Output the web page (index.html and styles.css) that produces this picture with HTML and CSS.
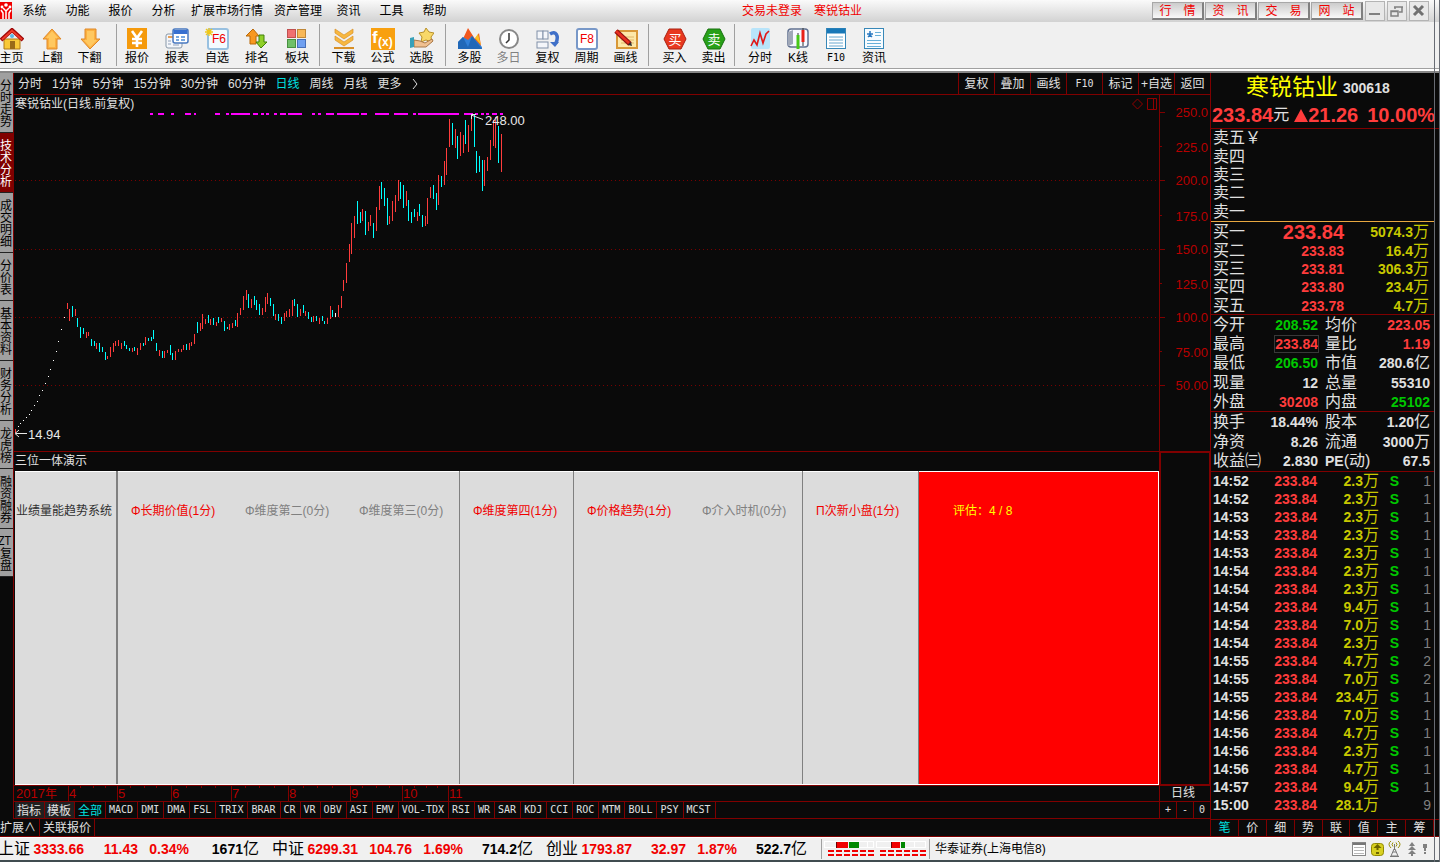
FILE: index.html
```html
<!DOCTYPE html>
<html lang="zh-CN">
<head>
<meta charset="utf-8">
<title>寒锐钴业 300618</title>
<link rel="stylesheet" href="styles.css">
</head>
<body>
<header class="menubar">
  <svg class="brand" width="13" height="20" viewBox="0 0 13 20"><rect y="1" width="12" height="17" fill="#f00000"/><path d="M3 7l3 3v8M9 7L6 10M1 9l2 3v6M11 9l-2 3v6" stroke="#fff" stroke-width="1.500" fill="none"/><circle cx="6" cy="4" r="1.800" fill="#fff"/><circle cx="2" cy="6" r="1.400" fill="#fff"/><circle cx="10" cy="6" r="1.400" fill="#fff"/></svg>
  <nav class="menu">
    <button>系统</button><button>功能</button><button>报价</button><button>分析</button><button class="menu-wide">扩展市场行情</button><button>资产管理</button><button>资讯</button><button>工具</button><button>帮助</button>
  </nav>
  <div class="login"><span>交易未登录</span><span>寒锐钴业</span></div>
  <div class="channels"><button>行<span>情</span></button><button>资<span>讯</span></button><button>交<span>易</span></button><button>网<span>站</span></button></div>
  <div class="window-controls">
    <button aria-label="最小化"><svg width="18" height="18" viewBox="0 0 18 18"><path d="M3 12h11" stroke="#808080" stroke-width="2"/></svg></button>
    <button aria-label="还原"><svg width="18" height="18" viewBox="0 0 18 18" fill="none" stroke="#808080" stroke-width="1.500"><path d="M7 7V5h7v5h-3M6 5h9"/><path d="M3 9h7v5H3zM3 9.500h7"/></svg></button>
    <button aria-label="关闭"><svg width="18" height="18" viewBox="0 0 18 18"><path d="M4 4l9 9M13 4l-9 9" stroke="#707070" stroke-width="3"/></svg></button>
  </div>
</header>

<div class="toolbar">
  <div class="tools tools-nav">
    <button><svg viewBox="0 0 24 22"><path d="M4 11h16v10H4z" fill="#f8c838" stroke="#b07818"/><path d="M1 12L12 2l11 10" fill="none" stroke="#a00808" stroke-width="4"/><path d="M2 11.500L12 2.500l10 9" fill="none" stroke="#ee3a2a" stroke-width="2"/><rect x="10" y="13" width="5" height="8" fill="#9a6a18"/><circle cx="12" cy="8" r="2" fill="#58b8e8"/></svg>主页</button>
    <button><svg viewBox="0 0 24 22"><path d="M13 1l9 10h-4v10H8V11H4z" fill="#fbb040" stroke="#e08828"/><path d="M13 3l6 7h-3v9h-6v-9H7z" fill="#ffc860"/></svg>上翻</button>
    <button><svg viewBox="0 0 24 22"><path d="M12 21l10-10h-4V1H7v10H3z" fill="#fbb040" stroke="#e08828"/><path d="M12 19l7-7h-3V3H9v9H6z" fill="#ffc860"/></svg>下翻</button>
  </div>
  <div class="tools tools-quote">
    <button><svg viewBox="0 0 24 22"><rect x="2" width="20" height="21" fill="#f59a0c"/><path d="M7 3l5 7 5-7M12 10v9M7 11h10M7 15h10" stroke="#fff" stroke-width="2.600" fill="none"/></svg>报价</button>
    <button><svg viewBox="0 0 24 22"><rect x="1" y="6" width="16" height="14" rx="2" fill="#f4f6fa" stroke="#8898a8"/><path d="M3 9h5" stroke="#e8a058" stroke-width="2"/><path d="M3 13h3M3 16h3M8 17h6" stroke="#90a0b8"/><rect x="8" y="1" width="15" height="14" rx="2" fill="#fff" stroke="#4878c0" stroke-width="1.500"/><path d="M8.500 4h14" stroke="#3870d0" stroke-width="4"/><path d="M11 9h3M16 9h4M11 12h3M16 12h4" stroke="#78a8e0" stroke-width="2"/></svg>报表</button>
    <button><svg viewBox="0 0 24 22"><rect x="3" y="1" width="20" height="20" rx="2" fill="#f4fbff" stroke="#98c0e0" stroke-width="2"/><text x="7" y="15" font-size="12" fill="#f00000">F6</text><path d="M4 0v8M0 4h8M1 1l6 6M7 1L1 7" stroke="#f0c818" stroke-width="1.300"/></svg>自选</button>
    <button><svg viewBox="0 0 24 22"><path d="M8 1l6 7h-3v8H5V8H1z" fill="#f89820" stroke="#b86808"/><path d="M16 20l6-6h-3V7h-5v7h-3z" fill="#90d028" stroke="#408008"/></svg>排名</button>
    <button><svg viewBox="0 0 24 22"><g stroke-width="1"><rect x="2.500" y="1.500" width="8" height="8" fill="#f07070" stroke="#c05050"/><rect x="12.500" y="1.500" width="8" height="8" fill="#f8b858" stroke="#c08838"/><rect x="2.500" y="11.500" width="8" height="8" fill="#70c068" stroke="#489040"/><rect x="12.500" y="11.500" width="8" height="8" fill="#70a0f0" stroke="#4870b8"/></g></svg>板块</button>
  </div>
  <div class="tools tools-extra">
    <button><svg viewBox="0 0 24 22"><path d="M3 1l9 6 9-6v4l-9 6-9-6zM3 8l9 6 9-6v4l-9 6-9-6z" fill="#f8b840" stroke="#d89028" stroke-width=".7"/><path d="M2 20h20" stroke="#d89028" stroke-width="2"/></svg>下载</button>
    <button><svg viewBox="0 0 24 22"><rect width="24" height="22" fill="#f8a010"/><text x="1" y="15" font-size="17" fill="#fff" font-weight="bold">f</text><text x="7" y="18" font-size="12" fill="#fff" font-weight="bold">(x)</text></svg>公式</button>
    <button><svg viewBox="0 0 24 22"><path d="M16 0l3 4 5 1-3 4 1 5-6-2-5 2 1-5-3-4 5-1z" fill="#f8d868" stroke="#b89028"/><path d="M4 12l6 1 5 2 7-4 1 2-7 6H4z" fill="#f0c090" stroke="#a87848"/><path d="M0 10l4-1v10l-4 1z" fill="#38a0b8"/></svg>选股</button>
  </div>
  <div class="tools tools-view">
    <button><svg viewBox="0 0 24 22"><path d="M3 15L10 0l7 11 4-6 2 13z" fill="#f05820"/><path d="M17 10l3-4 3 11z" fill="#f8c020"/><path d="M0 14l5-5 5 3 4-4 10 11v2H0z" fill="#3080d8"/><path d="M0 14l5-5 5 10 4-11 10 13H0z" fill="#2068b8"/></svg>多股</button>
    <button class="muted"><svg viewBox="0 0 24 22"><circle cx="12" cy="11" r="9" fill="#fff" stroke="#888" stroke-width="2"/><path d="M12 5v7l-3 3" fill="none" stroke="#333" stroke-width="1.500"/></svg>多日</button>
    <button><svg viewBox="0 0 24 22"><g fill="#f4f6fa" stroke="#8090a8"><rect x="1" y="3" width="6" height="8"/><rect x="7" y="3" width="5" height="8"/><rect x="1" y="14" width="11" height="6"/></g><path d="M14 6c6-4 9 2 6 9" fill="none" stroke="#4070c8" stroke-width="3.500"/><path d="M14 14h9l-4 5z" fill="#4070c8"/></svg>复权</button>
    <button><svg viewBox="0 0 24 22"><rect x="2" y="1" width="20" height="20" rx="2" fill="#fff" stroke="#7898c8" stroke-width="2"/><text x="5" y="15" font-size="12" fill="#f00000">F8</text></svg>周期</button>
    <button><svg viewBox="0 0 24 22"><rect x="3" y="3" width="20" height="17" fill="#fde8a8" stroke="#d89838" stroke-width="2"/><path d="M7 9h13M7 12h13M7 15h13" stroke="#e0b868"/><path d="M2 3l14 13" stroke="#901010" stroke-width="5"/><path d="M2 3l13 12" stroke="#e83020" stroke-width="2.500"/><path d="M14 17l4 1-1-4z" fill="#333"/></svg>画线</button>
  </div>
  <div class="tools tools-trade">
    <button><svg viewBox="0 0 24 22"><path d="M6 1h12l5 10-5 10H6L1 11z" fill="#e83820" stroke="#a82010"/><text x="12" y="16" font-size="13" fill="#fff" text-anchor="middle">买</text></svg>买入</button>
    <button><svg viewBox="0 0 24 22"><path d="M6 1h12l5 10-5 10H6L1 11z" fill="#28a018" stroke="#187010"/><text x="12" y="16" font-size="13" fill="#fff" text-anchor="middle">卖</text></svg>卖出</button>
  </div>
  <div class="tools tools-stock">
    <button><svg viewBox="0 0 24 22"><rect x="3" y="0" width="19" height="21" rx="2" fill="#b8e4fa"/><path d="M3 18l3-6 3 5 3-12 3 10 3-9 3-3" fill="none" stroke="#e01818" stroke-width="1.600"/></svg>分时</button>
    <button><svg viewBox="0 0 24 22"><rect x="2" y="1" width="20" height="18" rx="3" fill="#f8f8ff" stroke="#607090" stroke-width="1.500"/><path d="M2 4l5-2v14l-5 2z" fill="#a0a8b8"/><path d="M12 5v16M17 0v18" stroke="#333"/><path d="M12 7v14" stroke="#48c818" stroke-width="3"/><path d="M17 2v12" stroke="#e82018" stroke-width="3"/></svg>K线</button>
    <button><svg viewBox="0 0 24 22"><rect x="2.500" y=".5" width="19" height="20" fill="#fff" stroke="#3888b8"/><path d="M3 3h18" stroke="#1878b8" stroke-width="5"/><path d="M5 9h14M5 12h14M5 15h14M5 18h14" stroke="#68a8d0"/></svg><i class="f10">F10</i></button>
    <button><svg viewBox="0 0 24 22"><rect x="2.500" y=".5" width="19" height="20" fill="#f8fcff" stroke="#3888b8"/><path d="M13 4.500h6M13 7.500h6M5 12.500h14M5 15.500h14M5 18.500h14" stroke="#68b0d8"/><path d="M8 3v6M5 6h6M6 9l2-2 2 2" stroke="#2878c0" stroke-width="1.500" fill="none"/></svg>资讯</button>
  </div>
</div>

<main class="workspace">
  <section class="terminal">
    <div class="desk">
      <nav class="side">
        <button class="tall">分时走势</button><button class="tall on">技术分析</button><button class="tall">成交明细</button><button>分价表</button><button class="tall">基本资料</button><button class="tall">财务分析</button><button>龙虎榜</button><button class="tall">融资融券</button><button><span class="across">ZT</span>复盘</button>
      </nav>
      <div class="charts">
        <div class="periods">
          <nav class="period-list"><button>分时</button><button>1分钟</button><button>5分钟</button><button>15分钟</button><button>30分钟</button><button>60分钟</button><button class="cyan">日线</button><button>周线</button><button>月线</button><button>更多</button><button aria-label="展开"><svg width="6" height="12" viewBox="0 0 6 12"><path d="M1 1l4 5-4 5" fill="none" stroke="#e0e0e0"/></svg></button></nav>
          <div class="chart-tools"><button>复权</button><button>叠加</button><button>画线</button><button class="mono">F10</button><button>标记</button><button>+自选</button><button>返回</button></div>
        </div>
        <div class="pane pane-k">
          <div class="plot">
            <svg class="canvas" shape-rendering="crispEdges">
              <g fill="none" stroke="#780000" stroke-dasharray="1 3">
                <path d="M1 85.500H3000M1 154.500H3000M1 222.500H3000M1 290.500H3000"/>
              </g>
              <g transform="translate(-14 -95)">
                <path fill="none" stroke="#ff00ff" stroke-width="2" d="M150 114h3M158 114h6M171 114h3M185 114h6M194 114h2M215 114h5M226 114h3M231 114h19M253 114h5M261 114h3M266 114h3M274 114h3M280 114h6M288 114h14M312 114h3M318 114h3M326 114h8M337 114h22M361 114h6M375 114h14M394 114h14M413 114h3M418 114h41M464 114h9M475 114h3M481 114h3M486 114h3M492 114h5M500 114h3"/>
                <path transform="translate(.5 0)" fill="none" stroke="#ff3c3c" d="M15 429v4M67 303V309M69 309V321M75 309V316M86 332V338M88 332V336M96 343V349M107 356V359M110 347V357M113 343V352M115 341V346M118 340V346M121 343V349M132 348V352M137 348V355M140 343V350M145 337V345M159 350V356M164 351V358M167 350V353M175 351V360M178 349V352M181 349V352M183 345V350M189 343V350M191 342V346M194 334V344M200 323V331M202 314V329M205 319V324M210 319V325M216 322V326M221 318V322M229 324V330M232 323V328M237 313V327M240 308V315M243 296V310M246 290V300M251 299V308M262 308V315M265 297V312M267 293V304M275 314V320M284 313V321M286 311V317M289 309V317M292 300V316M300 309V316M305 311V316M313 316V322M319 318V324M327 318V324M330 306V319M338 305V317M341 296V308M343 280V291M346 263V283M349 244V262M351 223V254M354 216V238M362 209V221M368 222V231M370 215V226M376 207V231M379 186V210M389 216V224M392 201V221M395 195V212M398 180V201M406 191V206M417 212V221M425 216V226M427 198V224M430 187V198M438 175V205M444 161V185M446 148V175M449 119V147M455 129V148M460 132V156M463 135V153M468 125V152M471 115V131M484 160V186M487 157V171M490 140V160M493 120V146M495 117V148M501 134V172"/>
                <path transform="translate(.5 0)" fill="none" stroke="#00ffff" d="M72 306V317M77 318V327M80 327V338M83 328V334M91 339V346M94 341V346M99 343V352M102 347V352M105 352V360M124 341V346M126 345V349M129 348V351M134 347V351M143 343V346M148 338V341M151 337V341M153 330V339M156 343V351M162 351V358M170 345V355M172 353V360M186 344V350M197 322V333M208 315V323M213 318V325M218 317V323M224 321V331M227 327V329M235 320V326M248 294V308M254 296V305M256 300V310M259 304V315M270 298V306M273 304V316M278 314V321M281 317V324M294 299V306M297 304V317M303 305V313M308 312V319M311 317V322M316 316V321M322 316V321M324 321V324M332 310V317M357 201V224M360 212V223M365 211V235M373 223V238M381 182V199M384 188V206M387 198V225M400 182V199M403 185V208M408 200V221M411 212V223M414 209V217M419 204V216M422 215V227M433 185V199M436 193V210M441 176V187M452 123V145M457 136V159M465 120V144M474 115V147M476 151V173M479 156V172M482 160V191M498 126V163"/>
                <path transform="translate(.5 0)" fill="none" stroke="#fff" d="M335 313v4M18 426v1M20 423v1M23 420v1M26 417v1M29 414v1M31 410v1M34 405v1M37 401v1M39 395v1M42 390v1M45 383v1M48 376v1M50 369v1M53 360v1M56 351v1M58 341v1M61 329v1M64 317v1"/>
                <g fill="none" stroke="#e8e8e8" shape-rendering="auto"><path d="M16 433.500h11M19 430l-4 3.500 4 3.500M471 115l12 4.500M476 114.500h-4.500v4.500"/></g>
                <g fill="#e8e8e8" font-size="13"><text x="28" y="439">14.94</text><text x="485" y="125">248.00</text></g>
              </g>
            </svg>
            <h2 class="pane-title">寒锐钴业(日线.前复权)</h2>
            <svg class="pane-marks" width="26" height="12" viewBox="0 0 26 12" fill="none" stroke="#900000"><path d="M5.500 1l5 5-5 5-5-5z"/><path d="M15.500.5h9v11h-9zM21.500.5v11"/></svg>
          </div>
          <svg class="axis" shape-rendering="crispEdges">
            <path fill="none" stroke="#800000" d="M0 17.500h5M0 51.500h2M0 85.500h5M0 120.500h2M0 154.500h5M0 188.500h2M0 222.500h5M0 256.500h2M0 290.500h5"/>
            <g fill="#b80000" font-size="13" text-anchor="end"><text x="48" y="22">250.0</text><text x="48" y="57">225.0</text><text x="48" y="90">200.0</text><text x="48" y="126">175.0</text><text x="48" y="159">150.0</text><text x="48" y="194">125.0</text><text x="48" y="227">100.0</text><text x="48" y="262">75.00</text><text x="48" y="295">50.00</text></g>
          </svg>
        </div>
        <div class="pane pane-score">
          <div class="score">
            <h2 class="pane-title">三位一体演示</h2>
            <div class="score-grid">
              <div class="dark thick">业绩量能趋势系统</div><div class="hit">Φ长期价值(1分)</div><div>Φ维度第二(0分)</div><div class="ruled">Φ维度第三(0分)</div><div class="hit ruled">Φ维度第四(1分)</div><div class="hit">Φ价格趋势(1分)</div><div class="ruled">Φ介入时机(0分)</div><div class="hit ruled">П次新小盘(1分)</div><div class="total">评估：4 / 8</div>
            </div>
          </div>
          <div class="score-axis"></div>
        </div>
        <div class="time-row">
          <svg class="time-axis" shape-rendering="crispEdges">
            <path fill="none" stroke="#800000" d="M54.500 0v16M103.500 0v16M157.500 0v16M217.500 0v16M274.500 0v16M336.500 0v16M388.500 0v16M434.500 0v16M66.500 0v2M79.500 0v2M91.500 0v2M116.500 0v2M130.500 0v2M142.500 0v2M172.500 0v2M187.500 0v2M201.500 0v2M231.500 0v2M245.500 0v2M260.500 0v2M289.500 0v2M303.500 0v2M318.500 0v2M348.500 0v2M362.500 0v2M375.500 0v2M400.500 0v2M412.500 0v2M423.500 0v2"/>
            <g fill="#b80000" font-size="13"><text x="2" y="12">2017<tspan font-size="12">年</tspan></text><text x="55" y="12">4</text><text x="104" y="12">5</text><text x="158" y="12">6</text><text x="218" y="12">7</text><text x="275" y="12">8</text><text x="337" y="12">9</text><text x="389" y="12">10</text><text x="435" y="12">11</text></g>
          </svg>
          <div class="cycle">日线</div>
        </div>
        <div class="indicators">
          <nav class="indicator-list"><button class="cn raised">指标</button><button class="cn raised">模板</button><button class="cn cyan">全部</button><button>MACD</button><button>DMI</button><button>DMA</button><button>FSL</button><button>TRIX</button><button>BRAR</button><button>CR</button><button>VR</button><button>OBV</button><button>ASI</button><button>EMV</button><button>VOL-TDX</button><button>RSI</button><button>WR</button><button>SAR</button><button>KDJ</button><button>CCI</button><button>ROC</button><button>MTM</button><button>BOLL</button><button>PSY</button><button>MCST</button></nav>
          <div class="zooms"><button>+</button><button>-</button><button>0</button></div>
        </div>
      </div>
    </div>
    <nav class="links"><button>扩展∧</button><button>关联报价</button></nav>
  </section>

  <aside class="quote">
    <h1 class="stock">寒锐钴业<b>300618</b></h1>
    <div class="last"><b>233.84</b><span>元</span><b class="rise"><svg width="14" height="13" viewBox="0 0 14 13"><path d="M7 0l7 13H0z" fill="#ff3c3c"/></svg>21.26</b><b>10.00%</b></div>
    <table class="book asks">
      <tr><th>卖五￥</th></tr><tr><th>卖四</th></tr><tr><th>卖三</th></tr><tr><th>卖二</th></tr><tr><th>卖一</th></tr>
    </table>
    <table class="book bids">
      <tr><th>买一</th><td class="up best">233.84</td><td class="vol"><b>5074.3</b>万</td></tr>
      <tr><th>买二</th><td class="up">233.83</td><td class="vol"><b>16.4</b>万</td></tr>
      <tr><th>买三</th><td class="up">233.81</td><td class="vol"><b>306.3</b>万</td></tr>
      <tr><th>买四</th><td class="up">233.80</td><td class="vol"><b>23.4</b>万</td></tr>
      <tr><th>买五</th><td class="up">233.78</td><td class="vol"><b>4.7</b>万</td></tr>
    </table>
    <table class="facts facts-price">
      <tr><th>今开</th><td class="down">208.52</td><th>均价</th><td class="up">223.05</td></tr>
      <tr><th>最高</th><td class="up"><span class="boxed">233.84</span></td><th>量比</th><td class="up">1.19</td></tr>
      <tr><th>最低</th><td class="down">206.50</td><th>市值</th><td>280.6<i>亿</i></td></tr>
      <tr><th>现量</th><td>12</td><th>总量</th><td>55310</td></tr>
      <tr><th>外盘</th><td class="up">30208</td><th>内盘</th><td class="down">25102</td></tr>
    </table>
    <table class="facts facts-base">
      <tr><th>换手</th><td>18.44%</td><th>股本</th><td>1.20<i>亿</i></td></tr>
      <tr><th>净资</th><td>8.26</td><th>流通</th><td>3000<i>万</i></td></tr>
      <tr><th>收益㈢</th><td>2.830</td><th><b>PE</b>(动)</th><td>67.5</td></tr>
    </table>
    <table class="ticks">
      <tr><th>14:52</th><td class="up">233.84</td><td class="vol">2.3<i>万</i></td><td class="side-s">S</td><td class="n">1</td></tr>
      <tr><th>14:52</th><td class="up">233.84</td><td class="vol">2.3<i>万</i></td><td class="side-s">S</td><td class="n">1</td></tr>
      <tr><th>14:53</th><td class="up">233.84</td><td class="vol">2.3<i>万</i></td><td class="side-s">S</td><td class="n">1</td></tr>
      <tr><th>14:53</th><td class="up">233.84</td><td class="vol">2.3<i>万</i></td><td class="side-s">S</td><td class="n">1</td></tr>
      <tr><th>14:53</th><td class="up">233.84</td><td class="vol">2.3<i>万</i></td><td class="side-s">S</td><td class="n">1</td></tr>
      <tr><th>14:54</th><td class="up">233.84</td><td class="vol">2.3<i>万</i></td><td class="side-s">S</td><td class="n">1</td></tr>
      <tr><th>14:54</th><td class="up">233.84</td><td class="vol">2.3<i>万</i></td><td class="side-s">S</td><td class="n">1</td></tr>
      <tr><th>14:54</th><td class="up">233.84</td><td class="vol">9.4<i>万</i></td><td class="side-s">S</td><td class="n">1</td></tr>
      <tr><th>14:54</th><td class="up">233.84</td><td class="vol">7.0<i>万</i></td><td class="side-s">S</td><td class="n">1</td></tr>
      <tr><th>14:54</th><td class="up">233.84</td><td class="vol">2.3<i>万</i></td><td class="side-s">S</td><td class="n">1</td></tr>
      <tr><th>14:55</th><td class="up">233.84</td><td class="vol">4.7<i>万</i></td><td class="side-s">S</td><td class="n">2</td></tr>
      <tr><th>14:55</th><td class="up">233.84</td><td class="vol">7.0<i>万</i></td><td class="side-s">S</td><td class="n">2</td></tr>
      <tr><th>14:55</th><td class="up">233.84</td><td class="vol">23.4<i>万</i></td><td class="side-s">S</td><td class="n">1</td></tr>
      <tr><th>14:56</th><td class="up">233.84</td><td class="vol">7.0<i>万</i></td><td class="side-s">S</td><td class="n">1</td></tr>
      <tr><th>14:56</th><td class="up">233.84</td><td class="vol">4.7<i>万</i></td><td class="side-s">S</td><td class="n">1</td></tr>
      <tr><th>14:56</th><td class="up">233.84</td><td class="vol">2.3<i>万</i></td><td class="side-s">S</td><td class="n">1</td></tr>
      <tr><th>14:56</th><td class="up">233.84</td><td class="vol">4.7<i>万</i></td><td class="side-s">S</td><td class="n">1</td></tr>
      <tr><th>14:57</th><td class="up">233.84</td><td class="vol">9.4<i>万</i></td><td class="side-s">S</td><td class="n">1</td></tr>
      <tr><th>15:00</th><td class="up">233.84</td><td class="vol">28.1<i>万</i></td><td></td><td class="n">9</td></tr>
    </table>
    <nav class="quote-tabs"><button class="cyan">笔</button><button>价</button><button>细</button><button>势</button><button>联</button><button>值</button><button>主</button><button>筹</button></nav>
  </aside>
</main>

<footer class="ticker">
  <div class="index"><span>上证</span><b>3333.66</b><b>11.43</b><b>0.34%</b><span class="amount"><b>1671</b>亿</span></div>
  <div class="index"><span>中证</span><b>6299.31</b><b>104.76</b><b>1.69%</b><span class="amount"><b>714.2</b>亿</span></div>
  <div class="index"><span>创业</span><b>1793.87</b><b>32.97</b><b>1.87%</b><span class="amount"><b>522.7</b>亿</span></div>
  <div class="gauges"><svg width="107" height="20" viewBox="0 0 107 20" shape-rendering="crispEdges">
    <path d="M2.500 2.500h49v6h-49zM54.500 2.500h49v6h-49zM45.500 2v6M92.500 2v6" fill="none" stroke="#fff"/>
    <path d="M14 3h12v6H14zM69 3h9v6h-9z" fill="#f00000"/><path d="M14 3h1v6h-1zM69 3h1v6h-1z" fill="#700000"/><path d="M27 3h10v6H27zM79 3h4v6h-4z" fill="#008800"/>
    <path d="M6 12h46M6 16h46M58 12h46M58 16h46" stroke="#f00000" stroke-width="2" stroke-dasharray="6 2"/>
  </svg></div>
  <div class="server">华泰证券(上海电信8)</div>
  <div class="tray">
    <svg width="15" height="16" viewBox="0 0 15 16"><rect x=".5" y="1.500" width="13" height="13" fill="#fff" stroke="#888"/><path d="M1 3h13" stroke="#777" stroke-width="2"/><path d="M2 6.500h10M2 9.500h10M2 12.500h10" stroke="#b8b8b8"/></svg>
    <svg width="13" height="16" viewBox="0 0 13 16"><rect x=".5" y="2.500" width="12" height="12" rx="3" fill="#d8d020" stroke="#908800"/><path d="M6.500 3l4 4h-3v2h-2V7h-3zM5 11h3v2H5z" fill="#6c6400"/></svg>
    <svg width="13" height="18" viewBox="0 0 13 18" fill="none"><path d="M3 1Q-1 4 3 8M10 1q4 3 0 7M5 2.500Q3 4.500 5 6.500M8 2.500q2 2 0 4" stroke="#98900c"/><path d="M6.500 4v6M6 9l-3 7h7l-3-7M5 12h3M2 16.500h9" stroke="#777"/></svg>
    <svg width="8" height="14" viewBox="0 0 8 14"><path d="M4 0l3 4H1zM4 4l4 4H0zM4 8l4 4H0zM3 11h2v3H3z" fill="#808080"/></svg>
    <svg width="4" height="10" viewBox="0 0 4 10"><path d="M0 0h4v4H3v3H1V4H0zM1 8h2v2H1z" fill="#808080"/></svg>
  </div>
</footer>
<div class="window-edge"></div>
</body>
</html>
```
FILE: styles.css
```css
* { box-sizing: border-box; }
body {
  margin: 0;
  min-height: 100vh;
  display: flex;
  flex-direction: column;
  overflow-x: hidden;
  position: relative;
  background: #0a0a0a;
  color: #e0e0e0;
  font: 12px/16px "Liberation Sans", "Noto Sans CJK SC", sans-serif;
}
button {
  margin: 0;
  padding: 0;
  border: 0;
  background: none;
  color: inherit;
  font: inherit;
  white-space: nowrap;
}
h1, h2 { margin: 0; font-weight: normal; }
i { font-style: normal; font-weight: normal; }
svg { display: block; }
table { width: 100%; border-collapse: collapse; table-layout: fixed; }
th, td { padding: 0; font-weight: normal; white-space: nowrap; }
.cyan { color: #00e0e0; }

/* menu bar */
.menubar {
  height: 22px;
  display: flex;
  align-items: center;
  padding-right: 11px;
  background: linear-gradient(#fafafa, #d2d2d2);
  color: #000;
}
.brand { flex: none; }
.menu { display: flex; }
.menu button { min-width: 43px; padding: 0 5px; }
.menu .menu-wide { padding: 0 6px; }
.login { display: flex; gap: 12px; margin: 0 auto; padding-right: 4px; color: #f00000; }
.channels { display: flex; gap: 1px; margin-right: 2px; }
.channels button {
  width: 52px;
  height: 18px;
  display: flex;
  align-items: center;
  justify-content: center;
  gap: 12px;
  border: 1px solid #a8a8a8;
  border-right: 2px solid #808080;
  border-bottom: 2px solid #808080;
  background: linear-gradient(#ccc, #f8f8f8);
  color: #f00000;
}
.window-controls { display: flex; gap: 2px; }
.window-controls button {
  width: 20px;
  height: 20px;
  border: 1px solid #b4b4b4;
  background: #e8e8e8;
}

/* toolbar */
.toolbar {
  height: 51px;
  display: flex;
  padding: 2px 0 0;
  background: #f0f0f0;
  border-bottom: 2px solid #888;
  box-shadow: inset 0 -2px #fff, inset 0 -3px #a0a0a0;
  color: #000;
}
.tools { display: flex; height: 42px; border-right: 1px solid #a0a0a0; }
.tools button { width: 39px; line-height: 14px; display: flex; flex-direction: column; align-items: center; padding-top: 4px; gap: 1px; }
.tools svg { width: 24px; height: 22px; }
.tools-nav { margin-left: -8px; padding-right: 7px; }
.tools-quote { padding-right: 2px; }
.tools-quote button { width: 40px; }
.tools-extra, .tools-view { padding-left: 4px; padding-right: 4px; }
.tools-view { padding-right: 3px; }
.tools-trade { padding-left: 6px; padding-right: 1px; }
.tools-stock { padding-left: 6px; border-right: 0; }
.tools-stock button { width: 38px; }
.muted { color: #808080; }
.f10, .mono { font-family: "DejaVu Sans Mono", monospace; font-size: 10px; }

/* work area */
.workspace { flex: 1; display: flex; }
.terminal { flex: 1; min-width: 0; display: flex; flex-direction: column; }
.desk { flex: 1; display: flex; }
.side { width: 14px; border-right: 1px solid #800000; }
.side button {
  display: flex;
  align-items: center;
  justify-content: center;
  width: 13px;
  height: 48px;
  padding-right: 4px;
  border-bottom: 1px solid #222;
  background: #a0a0a0;
  color: #000;
  writing-mode: vertical-rl;
  text-orientation: upright;
  line-height: 12px;
}
.side .tall { height: 60px; }
.side .on { background: #800000; color: #fff; }
.across { text-combine-upright: all; }

.charts { flex: 1; min-width: 0; display: flex; flex-direction: column; }
.periods { height: 22px; display: flex; justify-content: space-between; border-bottom: 1px solid #800000; }
.period-list { display: flex; align-items: center; gap: 10px; padding-left: 4px; }
.chart-tools { display: flex; }
.chart-tools button { width: 36px; border-left: 1px solid #800000; }

.pane { display: flex; min-height: 0; }
.pane-k { flex: 357 0 0; border-bottom: 1px solid #800000; }
.plot { flex: 1; min-width: 0; position: relative; }
.canvas { position: absolute; inset: 0; width: 100%; height: 100%; }
.pane-title { font-size: 12px; line-height: 18px; padding-left: 1px; }
.plot .pane-title { position: relative; width: max-content; }
.pane-marks { position: absolute; top: 3px; right: 1px; }
.axis { width: 51px; height: 100%; border-left: 1px solid #800000; }
.pane-score { flex: 333 0 0; }
.score { flex: 1; min-width: 0; display: flex; flex-direction: column; }
.score-grid {
  flex: 1;
  margin: 1px 0 0 1px;
  display: grid;
  grid-template-columns: 103fr 114fr 114fr 114fr 114fr 115fr 114fr 116fr 240fr;
  background: #dcdcdc;
  border-bottom: 1px solid #fff;
  box-shadow: inset 0 1px #fff;
}
.score-grid div { padding: 32px 0 0 13px; color: #808080; white-space: nowrap; }
.score-grid .hit { color: #f00000; }
.score-grid .dark { padding-left: 1px; color: #303030; }
.score-grid .thick { border-right: 2px solid #808080; }
.score-grid .ruled { border-right: 1px solid #808080; }
.score-grid .total { padding: 31px 0 0 34px; background: #f00; color: #ff0; border-top: 1px solid #fff; border-right: 1px solid #fff; }
.score-axis { width: 51px; border: 1px solid #800000; border-left-width: 2px; }

.time-row { height: 17px; display: flex; border-top: 1px solid #800000; border-bottom: 1px solid #800000; }
.time-axis { flex: 1; min-width: 0; height: 100%; }
.cycle { width: 51px; text-align: center; line-height: 15px; border-left: 1px solid #800000; padding-right: 4px; }
.indicators { height: 17px; display: flex; justify-content: space-between; border-bottom: 1px solid #800000; }
.indicator-list { display: flex; padding-left: 1px; }
.indicator-list button {
  padding: 0 4px 0 3px;
  border-right: 1px solid #800000;
  font: 10px/16px "DejaVu Sans Mono", monospace;
}
.indicator-list .cn { padding: 0 3px 0 2px; font: 12px/16px "Noto Sans CJK SC", sans-serif; }
.indicator-list .cn.cyan { padding-left: 3px; }
.raised { background: #202020; }
.zooms { width: 51px; display: flex; border-left: 1px solid #800000; }
.zooms button { flex: 1; border-right: 1px solid #800000; font: 10px/16px "DejaVu Sans Mono", monospace; }
.zooms button:last-child { border-right: 0; }
.links { height: 18px; display: flex; border-bottom: 1px solid #800000; }
.links button { padding: 0 3px; border-right: 1px solid #800000; }
.links button:first-child { padding-left: 0; }

/* quote panel */
.quote {
  width: 230px;
  padding-right: 6px;
  border-left: 1px solid #800000;
  display: flex;
  flex-direction: column;
  font-size: 16px;
}
.stock { height: 30px; line-height: 29px; padding-left: 35px; font-size: 23px; color: #ff0; display: flex; gap: 5px; white-space: nowrap; }
.stock b { font-size: 14px; color: #e0e0e0; line-height: 30px; }
.last { height: 26px; line-height: 24px; display: flex; padding-left: 1px; border-bottom: 1px solid #800000; white-space: nowrap; margin-right: -6px; }
.last b { font-size: 20px; color: #ff3c3c; }
.last .rise { display: flex; align-items: center; margin: 0 9px 0 5px; height: 24px; }
.book, .facts { font-size: 16px; line-height: 18px; }
.book th, .facts th { text-align: left; padding-left: 2px; }
.book tr, .ticks tr { height: 18px; }
.asks { border-bottom: 1px solid #e8a840; height: 93px; }
.bids { border-bottom: 1px solid #800000; height: 93px; line-height: 16px; }
.bids th, .bids td { padding-top: 2px; }
.bids th { width: 36px; }
.bids td { text-align: right; font-size: 14px; font-weight: bold; }
.bids .up { width: 97px; }
.bids .best { font-size: 20px; }
.book .vol { font-size: 16px; font-weight: normal; padding-right: 5px; }
.vol b { font-size: 14px; }
.up { color: #ff3c3c; }
.down { color: #00c800; }
.vol { color: #c8c800; }
.facts { border-bottom: 1px solid #800000; }
.facts-price { height: 97px; }
.facts-base { height: 60px; }
.facts tr { height: 19px; line-height: 18px; }
.facts th:first-child { width: 48px; }
.facts td { text-align: right; font-size: 14px; font-weight: bold; padding-right: 4px; }
.facts td:nth-child(2) { width: 61px; padding-right: 2px; }
.facts th:nth-child(3) { width: 48px; padding-left: 5px; }
.facts i, .ticks i { font-size: 16px; line-height: 16px; }
.facts th b { font-size: 14px; line-height: 16px; }
.boxed { outline: 1px solid #383838; }
.ticks { font-size: 14px; font-weight: bold; line-height: 17px; }
.ticks th { width: 46px; text-align: left; padding-left: 2px; font-weight: bold; }
.ticks td { text-align: right; font-weight: bold; }
.ticks td:nth-child(2) { width: 60px; }
.ticks .vol { width: 62px; }
.ticks .side-s { color: #00c800; width: 20px; }
.ticks .n { color: #808080; padding-right: 3px; font-weight: normal; }
.quote-tabs { margin-top: auto; height: 18px; display: flex; border-top: 1px solid #800000; border-bottom: 1px solid #800000; margin-right: -6px; padding-right: 6px; }
.quote-tabs button { flex: 1; border-right: 1px solid #800000; font-size: 12px; }

/* index ticker */
.ticker {
  height: 25px;
  display: flex;
  align-items: center;
  background: #f0f0f0;
  border-top: 1px solid #fff;
  border-bottom: 2px solid #404c50;
  color: #000;
}
.index {
  display: grid;
  grid-template-columns: 34px 52px 54px 51px 70px;
  padding-right: 13px;
  align-items: center;
  text-align: right;
  font-size: 16px;
  line-height: 22px;
  white-space: nowrap;
}
.index:first-child { margin-left: -2px; }
.index > span:first-child { text-align: left; }
.index b { font-size: 14px; color: #f00000; }
.index .amount b { color: #000; }
.gauges { margin-left: 1px; border-left: 1px solid #a0a0a0; border-right: 1px solid #a0a0a0; }
.server { padding-left: 5px; }
.tray { margin-left: auto; display: flex; align-items: center; gap: 4px; padding-right: 13px; }
.tray svg:nth-last-child(-n+2) { margin-left: 3px; }
.window-edge { position: absolute; top: 0; bottom: 0; right: 0; width: 6px; border-left: 1px solid #686c74; border-right: 1px solid #686c74; pointer-events: none; }
```
